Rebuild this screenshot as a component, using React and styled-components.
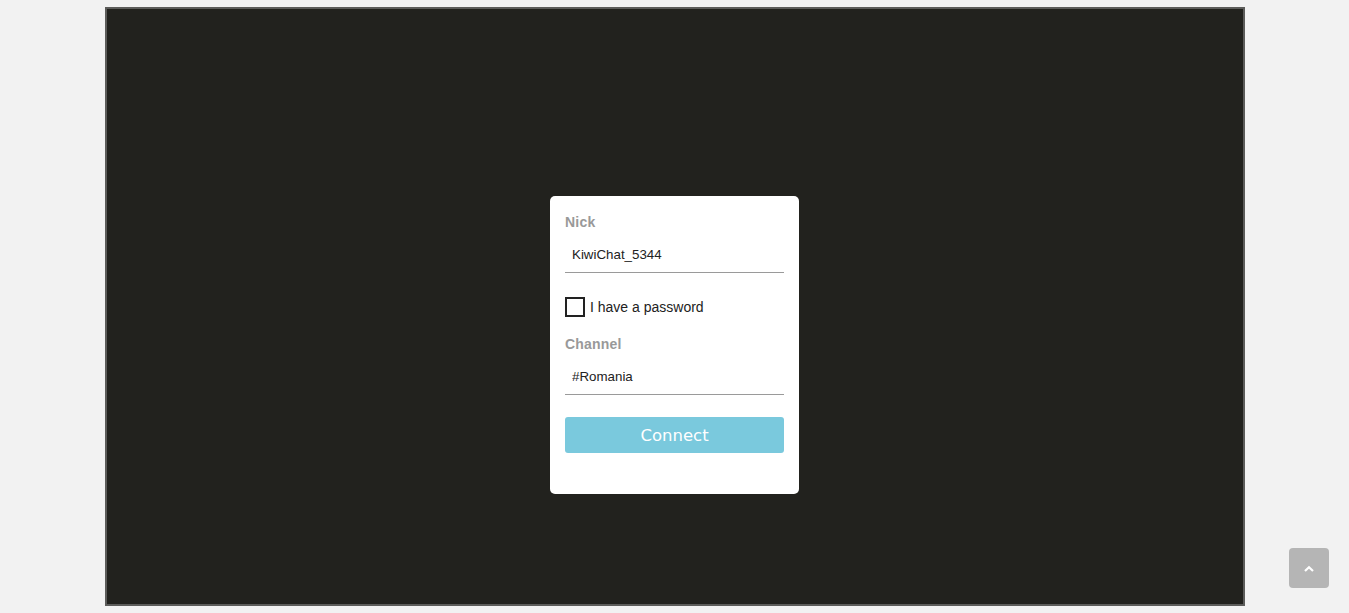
import React, { useState } from 'react';
import styled, { createGlobalStyle } from 'styled-components';

const GlobalStyle = createGlobalStyle`
  html, body {
    margin: 0;
    padding: 0;
    background: #f2f2f2;
    font-family: "Liberation Sans", Arial, sans-serif;
  }
`;

const Frame = styled.div`
  box-sizing: border-box;
  width: 1140px;
  height: 599px;
  margin: 7px auto 0;
  border: 2px solid #5c5c5a;
  background: #22221e;
  display: flex;
  flex-direction: column;
  align-items: center;
  padding-top: 187px;
`;

const Card = styled.form`
  box-sizing: border-box;
  width: 249px;
  height: 298px;
  background: #fff;
  border-radius: 5px;
  padding: 18px 15px 0;
  display: flex;
  flex-direction: column;
`;

const Label = styled.label`
  display: block;
  font-size: 14px;
  line-height: 16px;
  font-weight: bold;
  letter-spacing: 0.2px;
  color: #999;
  margin-top: ${(p) => p.$gap || 0}px;
`;

const TextInput = styled.input`
  box-sizing: border-box;
  width: 100%;
  height: 33px;
  margin-top: 10px;
  padding: 0 7px 4px;
  border: none;
  border-bottom: 1px solid #9a9a9a;
  outline: none;
  font-family: "Liberation Sans", Arial, sans-serif;
  font-size: 13.333px;
  color: #222;
  background: transparent;
`;

const CheckRow = styled.label`
  display: flex;
  align-items: center;
  gap: 5px;
  margin-top: 24px;
  height: 20px;
  font-size: 14px;
  color: #222;
  cursor: pointer;
`;

const Box = styled.span`
  box-sizing: border-box;
  width: 20px;
  height: 20px;
  border: 2px solid #222;
  background: ${(p) => (p.$checked ? '#222' : '#fff')};
`;

const ConnectButton = styled.button`
  width: 100%;
  height: 36px;
  margin-top: 22px;
  border: none;
  border-radius: 3px;
  background: #7ac9dd;
  color: #fff;
  font-family: "DejaVu Sans", Verdana, sans-serif;
  font-size: 16.5px;
  padding: 0;
  cursor: pointer;
`;

const ScrollTop = styled.button`
  position: fixed;
  right: 20px;
  bottom: 25px;
  width: 40px;
  height: 40px;
  border: none;
  border-radius: 4px;
  background: #b5b5b5;
  display: flex;
  align-items: center;
  justify-content: center;
  padding: 0;
  cursor: pointer;
`;

export default function App() {
  const [hasPassword, setHasPassword] = useState(false);

  return (
    <>
      <GlobalStyle />
      <Frame>
        <Card onSubmit={(e) => e.preventDefault()}>
          <Label>Nick</Label>
          <TextInput defaultValue="KiwiChat_5344" />
          <CheckRow onClick={() => setHasPassword(!hasPassword)}>
            <Box $checked={hasPassword} />
            I have a password
          </CheckRow>
          <Label $gap={19}>Channel</Label>
          <TextInput defaultValue="#Romania" />
          <ConnectButton type="submit">Connect</ConnectButton>
        </Card>
      </Frame>
      <ScrollTop aria-label="Scroll to top">
        <svg width="12" height="7" viewBox="0 0 12 7">
          <polyline points="2,6 6,2.2 10,6" fill="none" stroke="#fff" strokeWidth="2.2" />
        </svg>
      </ScrollTop>
    </>
  );
}
